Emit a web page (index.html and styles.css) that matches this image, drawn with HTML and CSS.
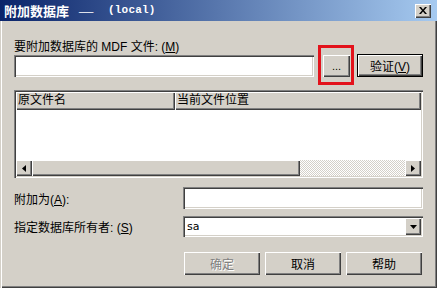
FILE: index.html
```html
<!DOCTYPE html>
<html lang="zh-CN">

    <head>
        <meta charset="UTF-8">
        <meta name="viewport" content="width=device-width, initial-scale=1.0">
        <title>附加数据库</title>
        <link rel="stylesheet" href="styles.css">
    </head>

    <body>
        <div class="dialog">
            <div class="titlebar">
                <span class="title">附加数据库<span class="dash">—</span><span class="server">(local)</span></span>
                <span class="close">
                    <svg width="8" height="7" viewBox="0 0 8 7">
                        <path d="M0 0h2l2 2.5L6 0h2L5 3.5 8 7H6L4 4.5 2 7H0l3-3.5z" fill="#000"/>
                    </svg>
                </span>
            </div>

            <div class="content">
                <div class="caption">要附加数据库的 MDF 文件: (<u>M</u>)</div>
                <div class="file-row">
                    <div class="field file-input"></div>
                    <button type="button" class="btn browse">...</button>
                    <button type="button" class="btn default">验证(<u>V</u>)</button>
                </div>

                <div class="listview">
                    <div class="list-header">
                        <div class="col col-name">原文件名</div>
                        <div class="col col-path">当前文件位置</div>
                    </div>
                    <div class="list-body"></div>
                    <div class="hscroll">
                        <div class="arrow">
                            <svg width="4" height="7" viewBox="0 0 4 7"><path d="M4 0v7L0 3.5z" fill="#000"/></svg>
                        </div>
                        <div class="thumb"></div>
                        <div class="track"></div>
                        <div class="arrow">
                            <svg width="4" height="7" viewBox="0 0 4 7"><path d="M0 0v7l4-3.5z" fill="#000"/></svg>
                        </div>
                    </div>
                </div>

                <div class="form-row row-name">
                    <label>附加为(<u>A</u>):</label>
                    <div class="field wide"></div>
                </div>
                <div class="form-row row-owner">
                    <label>指定数据库所有者: (<u>S</u>)</label>
                    <div class="field wide combo">
                        <span class="combo-text">sa</span>
                        <div class="drop">
                            <svg width="7" height="4" viewBox="0 0 7 4"><path d="M0 0h7L3.5 4z" fill="#000"/></svg>
                        </div>
                    </div>
                </div>

                <div class="actions">
                    <button type="button" class="btn action" disabled>确定</button>
                    <button type="button" class="btn action">取消</button>
                    <button type="button" class="btn action">帮助</button>
                </div>
            </div>
        </div>
    </body>

</html>
```

FILE: styles.css
```css
body {
    margin: 0;
    font-family: "Liberation Sans", "Noto Sans CJK SC", sans-serif;
    font-size: 12px;
    color: #000;
}

.dialog {
    width: 437px;
    height: 288px;
    background: #d4d0c8;
    box-shadow: inset 1px 1px #d4d0c8, inset 2px 2px #fff,
        inset -1px -1px #404040, inset -2px -2px #808080;
}

.titlebar {
    height: 21px;
    display: flex;
    align-items: center;
    justify-content: space-between;
    padding: 0 6px 0 4px;
    background: linear-gradient(to right, #0a246a, #a6caf0);
    color: #fff;
    box-sizing: border-box;
}

.title {
    display: flex;
    align-items: center;
    font-family: "Noto Sans CJK SC", sans-serif;
    font-weight: bold;
    font-size: 13px;
    line-height: 21px;
}

.dash {
    width: 18px;
    margin-left: 9px;
    overflow: hidden;
    transform: scaleX(1.4);
    transform-origin: left center;
    font-weight: normal;
}

.server {
    margin-left: 12px;
    font-family: "Liberation Mono", monospace;
    font-size: 11px;
    letter-spacing: 0.2px;
}

.close {
    width: 16px;
    height: 14px;
    display: flex;
    align-items: center;
    justify-content: center;
    background: #d4d0c8;
    box-shadow: inset 1px 1px #fff, inset -1px -1px #404040, inset -2px -2px #808080;
}

.content {
    padding: 0 14px;
}

.caption {
    margin-top: 19px;
    height: 14px;
    line-height: 14px;
    white-space: pre;
}

.file-row {
    display: flex;
    align-items: center;
    height: 23px;
}

.field {
    background: #fff;
    box-shadow: inset 1px 1px #808080, inset 2px 2px #404040,
        inset -1px -1px #fff, inset -2px -2px #d4d0c8;
}

.file-input {
    width: 300px;
    height: 22px;
}

.btn {
    border: none;
    padding: 0;
    background: #d4d0c8;
    font: inherit;
    color: #000;
    box-shadow: inset 1px 1px #fff, inset -1px -1px #404040, inset -2px -2px #808080;
}

.browse {
    position: relative;
    width: 27px;
    height: 22px;
    margin-left: 9px;
    font-size: 11px;
    line-height: 16px;
}

/* red highlight frame drawn around the browse button */
.browse::after {
    content: "";
    position: absolute;
    left: -5px;
    right: -4px;
    top: -10px;
    bottom: -8px;
    border: 3px solid #e3121b;
}

.default {
    width: 66px;
    height: 23px;
    margin-left: 7px;
    border: 1px solid #000;
}

.listview {
    margin-top: 13px;
    height: 88px;
    padding: 2px;
    box-sizing: border-box;
    display: flex;
    flex-direction: column;
    box-shadow: inset 1px 1px #808080, inset 2px 2px #404040,
        inset -1px -1px #fff, inset -2px -2px #d4d0c8;
}

.list-header {
    display: flex;
    height: 18px;
}

.col {
    padding-left: 2px;
    line-height: 17px;
    box-shadow: inset 1px 1px #fff, inset -1px -1px #404040, inset -2px -2px #808080;
    box-sizing: border-box;
}

.col-name {
    width: 159px;
}

.col-path {
    flex: 1;
}

.list-body {
    flex: 1;
    background: #fff;
}

.hscroll {
    display: flex;
    height: 16px;
}

.arrow {
    width: 16px;
    display: flex;
    align-items: center;
    justify-content: center;
    background: #d4d0c8;
    box-shadow: inset 1px 1px #fff, inset -1px -1px #404040, inset -2px -2px #808080;
}

.thumb {
    width: 268px;
    background: #d4d0c8;
    box-shadow: inset 1px 1px #fff, inset -1px -1px #404040, inset -2px -2px #808080;
}

.track {
    flex: 1;
    background: conic-gradient(#fff 25%, #d4d0c8 0 50%, #fff 0 75%, #d4d0c8 0);
    background-size: 2px 2px;
}

.form-row {
    display: flex;
    align-items: center;
}

.form-row label {
    width: 169px;
}

.row-name {
    margin-top: 9px;
}

.row-name .field {
    height: 22px;
}

.row-owner {
    margin-top: 7px;
}

.wide {
    width: 240px;
}

.combo {
    height: 21px;
    display: flex;
    align-items: center;
    justify-content: space-between;
    padding: 2px;
    box-sizing: border-box;
}

.combo-text {
    padding-left: 2px;
    font-family: "DejaVu Sans", sans-serif;
    font-size: 11px;
}

.drop {
    width: 16px;
    height: 17px;
    display: flex;
    align-items: center;
    justify-content: center;
    background: #d4d0c8;
    box-shadow: inset 1px 1px #fff, inset -1px -1px #404040, inset -2px -2px #808080;
}

.actions {
    display: flex;
    justify-content: flex-end;
    gap: 5px;
    margin-top: 15px;
    padding-right: 1px;
}

.action {
    width: 76px;
    height: 23px;
}

.action:disabled {
    color: #808080;
    text-shadow: 1px 1px #fff;
}
```
